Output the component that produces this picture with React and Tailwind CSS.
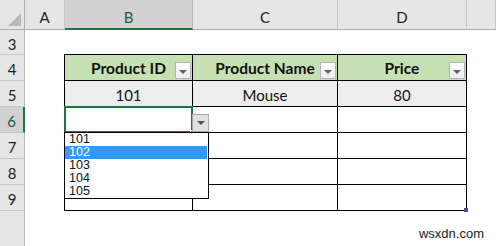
import React from 'react';

const cols = ['A', 'B', 'C', 'D', ''];
const rows = [3, 4, 5, 6, 7, 8, 9];

function FilterButton() {
  return (
    <div className="absolute right-[1px] bottom-[1px] w-[16px] h-[17px] border border-[#b4b4b4] bg-gradient-to-b from-white to-[#ececec] flex items-center justify-center">
      <div className="w-0 h-0 border-l-[4px] border-r-[4px] border-t-[4px] border-l-transparent border-r-transparent border-t-[#606060] mt-[2px]" />
    </div>
  );
}

export default function App() {
  const headers = ['Product ID', 'Product Name', 'Price'];
  return (
    <div
      className="relative w-[496px] h-[246px] overflow-hidden bg-white text-black"
      style={{ fontFamily: 'Lato, "Liberation Sans", sans-serif' }}
    >
      <div className="grid grid-cols-[25px_40px_128px_145px_129px_1fr] grid-rows-[30px_25px_26px_26px_26px_26px_26px_26px_1fr] h-full">
        {/* corner */}
        <div className="relative bg-[#e6e6e6] border-r border-b border-[#a9aeb5]">
          <div className="absolute right-[3px] bottom-[3px] w-0 h-0 border-b-[13px] border-l-[13px] border-b-[#b8b8b8] border-l-transparent" />
        </div>
        {cols.map((c) =>
          c === 'B' ? (
            <div key={c} className="bg-[#d2d2d2] border-r border-[#b8b8b8] border-b-2 border-b-[#217346] flex items-center justify-center text-[15px] text-[#1e5c36] pt-[7px]">
              {c}
            </div>
          ) : (
            <div key={c || 'x'} className="bg-[#e6e6e6] border-r border-[#c6c6c6] border-b border-b-[#a9aeb5] flex items-center justify-center text-[15px] text-[#222] pt-[6px]">
              {c}
            </div>
          )
        )}

        {rows.map((r) => (
          <div
            key={r}
            className={
              r === 6
                ? 'col-start-1 bg-[#d2d2d2] border-r-2 border-[#217346] border-b border-b-[#c4c4c4] flex items-center justify-center text-[15px] text-[#1e5c36] pt-[4px]'
                : 'col-start-1 bg-[#e6e6e6] border-r border-[#b8b8b8] border-b border-b-[#c8c8c8] flex items-center justify-center text-[15px] text-[#222] pt-[4px]'
            }
          >
            {r}
          </div>
        ))}
        <div className="col-start-1 bg-[#e6e6e6] border-r border-[#b8b8b8]" />

        {/* table */}
        <div className="col-start-3 col-span-3 row-start-3 row-span-6 grid grid-cols-[128px_145px_129px] grid-rows-[26px_26px_26px_26px_26px_26px] -mt-[1px] -ml-[1px] border-t-[1.5px] border-l-[1.5px] border-black">
          {headers.map((h) => (
            <div key={h} className="relative bg-[#c6e0b4] border-r-[1.5px] border-b-[1.5px] border-black flex items-center justify-center font-bold text-[15.5px] text-[#111] pt-[3px]">
              {h}
              <FilterButton />
            </div>
          ))}
          {['101', 'Mouse', '80'].map((v) => (
            <div key={v} className="bg-[#ededed] border-r-[1.5px] border-b-[1.5px] border-black flex items-center justify-center text-[15px] text-[#111] pt-[3px]">
              {v}
            </div>
          ))}
          {Array.from({ length: 12 }).map((_, i) => (
            <div key={i} className="relative bg-white border-r-[1.5px] border-b-[1.5px] border-black">
              {i === 0 && (
                <>
                  <div className="absolute -left-[1px] -top-[1px] w-[129px] h-[27px] border-2 border-[#217346]" />
                  <div className="absolute left-[125px] top-[23px] w-[5px] h-[5px] bg-[#217346] border border-white" />
                  <div className="absolute left-[127px] top-[7px] w-[17px] h-[18px] bg-[#e1e1e1] border border-[#a8a8a8] flex items-center justify-center z-10">
                    <div className="w-0 h-0 border-l-[4px] border-r-[4px] border-t-[4px] border-l-transparent border-r-transparent border-t-[#505050]" />
                  </div>
                  <div
                    className="absolute -left-[1px] top-[25px] w-[145px] bg-white border border-black z-20 text-[12.5px] leading-none"
                    style={{ fontFamily: '"Liberation Sans", sans-serif' }}
                  >
                    {['101', '102', '103', '104', '105'].map((o) => (
                      <div
                        key={o}
                        className={
                          o === '102'
                            ? 'h-[13px] pl-[4px] mr-[1px] bg-[#3399ff] text-white flex items-center'
                            : 'h-[13px] pl-[4px] text-[#111] flex items-center'
                        }
                      >
                        {o}
                      </div>
                    ))}
                  </div>
                </>
              )}
              {i === 11 && (
                <div className="absolute -right-[2px] -bottom-[2px] w-[4px] h-[4px] bg-[#4a5180]" />
              )}
            </div>
          ))}
        </div>
      </div>

      <div
        className="absolute right-[12px] bottom-[3px] text-[13px] text-[#222]"
        style={{ fontFamily: '"Liberation Sans", sans-serif' }}
      >
        wsxdn.com
      </div>
    </div>
  );
}
